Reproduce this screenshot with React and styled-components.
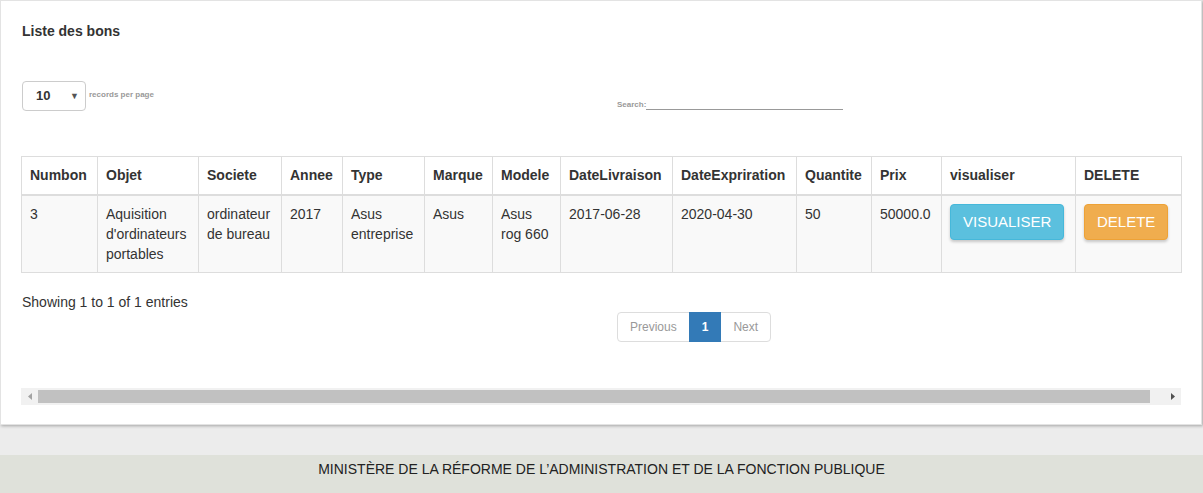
import React from 'react'
import styled, { createGlobalStyle } from 'styled-components'

const GlobalStyle = createGlobalStyle`
  html, body {
    margin: 0;
    padding: 0;
    background: #ececec;
    font-family: "Liberation Sans", Arial, sans-serif;
    color: #333;
    font-size: 14px;
    line-height: 20px;
  }
  * { box-sizing: border-box; }
`

const Page = styled.div`
  width: 1203px;
  height: 493px;
  display: flex;
  flex-direction: column;
`

const Card = styled.div`
  width: 1202px;
  height: 425px;
  background: #fff;
  border: 1px solid #e3e3e3;
  box-shadow: 1px 1px 3px rgba(0, 0, 0, 0.3);
  padding: 20px 20px 0 20px;
`

const Title = styled.h4`
  margin: 0 0 0 1px;
  font-size: 14px;
  line-height: 20px;
  font-weight: bold;
  color: #333;
`

const Controls = styled.div`
  display: grid;
  grid-template-columns: 580px 580px;
  margin-top: 40px;
  height: 75px;
  align-items: start;
`

const LengthBox = styled.div`
  display: flex;
  align-items: center;
  gap: 3px;
  padding-left: 1px;
`

const Select = styled.div`
  width: 64px;
  height: 30px;
  border: 1px solid #ccc;
  border-radius: 4px;
  display: flex;
  align-items: center;
  justify-content: space-between;
  padding: 0 6px 0 13px;
  font-size: 13px;
  font-weight: bold;
  color: #333;
`

const Caret = styled.span`
  font-size: 9px;
  color: #555;
`

const SmallLabel = styled.span`
  font-size: 8px;
  line-height: 10px;
  font-weight: bold;
  color: #999;
  margin-top: -2px;
`

const SearchBox = styled.div`
  display: flex;
  align-items: flex-end;
  padding-left: 16px;
  margin-top: 19px;
`

const SearchInput = styled.div`
  width: 197px;
  height: 10px;
  border-bottom: 1px solid #999;
`

const Table = styled.table`
  border-collapse: collapse;
  table-layout: fixed;
  width: 1160px;
`

const Th = styled.th`
  text-align: left;
  padding: 8px;
  font-weight: bold;
  border: 1px solid #ddd;
  border-bottom-width: 2px;
  white-space: nowrap;
  height: 38px;
`

const Td = styled.td`
  padding: 8px;
  vertical-align: top;
  border: 1px solid #ddd;
  background: #f9f9f9;
  height: 77px;
`

const ActionButton = styled.button`
  font-family: "Liberation Sans", Arial, sans-serif;
  font-size: 15px;
  line-height: 20px;
  padding: 7px 12px;
  color: #fff;
  border: 1px solid ${p => p.edge};
  background: ${p => p.bg};
  border-radius: 4px;
  box-shadow: 0 2px 3px rgba(0, 0, 0, 0.2);
  cursor: pointer;
`

const Info = styled.div`
  margin-top: 19px;
  padding-left: 1px;
`

const PagerRow = styled.div`
  padding-left: 596px;
`

const Pager = styled.ul`
  display: inline-flex;
  list-style: none;
  margin: 0;
  padding: 0;
`

const PageItem = styled.li`
  font-size: 12px;
  line-height: 18px;
  padding: 5px 12px;
  border: 1px solid ${p => (p.active ? '#337ab7' : '#ddd')};
  margin-left: ${p => (p.first ? '0' : '-1px')};
  background: ${p => (p.active ? '#337ab7' : '#fff')};
  color: ${p => (p.active ? '#fff' : '#999')};
  font-weight: ${p => (p.active ? 'bold' : 'normal')};
  border-radius: ${p => (p.first ? '4px 0 0 4px' : p.last ? '0 4px 4px 0' : '0')};
  min-width: ${p => (p.active ? '32px' : 'auto')};
  text-align: center;
  position: relative;
  z-index: ${p => (p.active ? 2 : 1)};
`

const ScrollTrack = styled.div`
  margin-top: 46px;
  width: 1160px;
  height: 17px;
  background: #f1f1f1;
  display: flex;
  align-items: center;
`

const ScrollArrow = styled.div`
  width: 17px;
  height: 17px;
  display: flex;
  align-items: center;
  justify-content: center;
`

const ScrollThumb = styled.div`
  flex: 1;
  height: 13px;
  background: #c1c1c1;
  margin-right: 14px;
`

const Footer = styled.footer`
  margin-top: 30px;
  height: 38px;
  background: #dfe1da;
  display: flex;
  align-items: flex-start;
  justify-content: center;
  padding-top: 4px;
  font-family: "Liberation Sans Narrow", "Liberation Sans", Arial, sans-serif;
  font-size: 14px;
  line-height: 20px;
  color: #222;
`

const widths = [76, 101, 83, 61, 82, 68, 68, 112, 124, 75, 70, 134, 106]
const headers = ['Numbon', 'Objet', 'Societe', 'Annee', 'Type', 'Marque', 'Modele', 'DateLivraison', 'DateExpriration', 'Quantite', 'Prix', 'visualiser', 'DELETE']
const row = ['3', "Aquisition d'ordinateurs portables", 'ordinateur de bureau', '2017', 'Asus entreprise', 'Asus', 'Asus rog 660', '2017-06-28', '2020-04-30', '50', '50000.0']

export default function App() {
  return (
    <Page>
      <GlobalStyle />
      <Card>
        <Title>Liste des bons</Title>
        <Controls>
          <LengthBox>
            <Select>
              <span>10</span>
              <Caret>▼</Caret>
            </Select>
            <SmallLabel>records per page</SmallLabel>
          </LengthBox>
          <SearchBox>
            <SmallLabel>Search:</SmallLabel>
            <SearchInput />
          </SearchBox>
        </Controls>
        <Table>
          <colgroup>
            {widths.map((w, i) => <col key={i} style={{ width: w }} />)}
          </colgroup>
          <thead>
            <tr>
              {headers.map(h => <Th key={h}>{h}</Th>)}
            </tr>
          </thead>
          <tbody>
            <tr>
              {row.map((c, i) => <Td key={i}>{c}</Td>)}
              <Td>
                <ActionButton bg="#5bc0de" edge="#46b8da">VISUALISER</ActionButton>
              </Td>
              <Td>
                <ActionButton bg="#f0ad4e" edge="#eea236">DELETE</ActionButton>
              </Td>
            </tr>
          </tbody>
        </Table>
        <Info>Showing 1 to 1 of 1 entries</Info>
        <PagerRow>
          <Pager>
            <PageItem first>Previous</PageItem>
            <PageItem active>1</PageItem>
            <PageItem last>Next</PageItem>
          </Pager>
        </PagerRow>
        <ScrollTrack>
          <ScrollArrow>
            <svg width="4" height="7" viewBox="0 0 4 7"><path d="M4 0 L0 3.5 L4 7 Z" fill="#a3a3a3" /></svg>
          </ScrollArrow>
          <ScrollThumb />
          <ScrollArrow>
            <svg width="4" height="7" viewBox="0 0 4 7"><path d="M0 0 L4 3.5 L0 7 Z" fill="#505050" /></svg>
          </ScrollArrow>
        </ScrollTrack>
      </Card>
      <Footer>MINISTÈRE DE LA RÉFORME DE L’ADMINISTRATION ET DE LA FONCTION PUBLIQUE</Footer>
    </Page>
  )
}
